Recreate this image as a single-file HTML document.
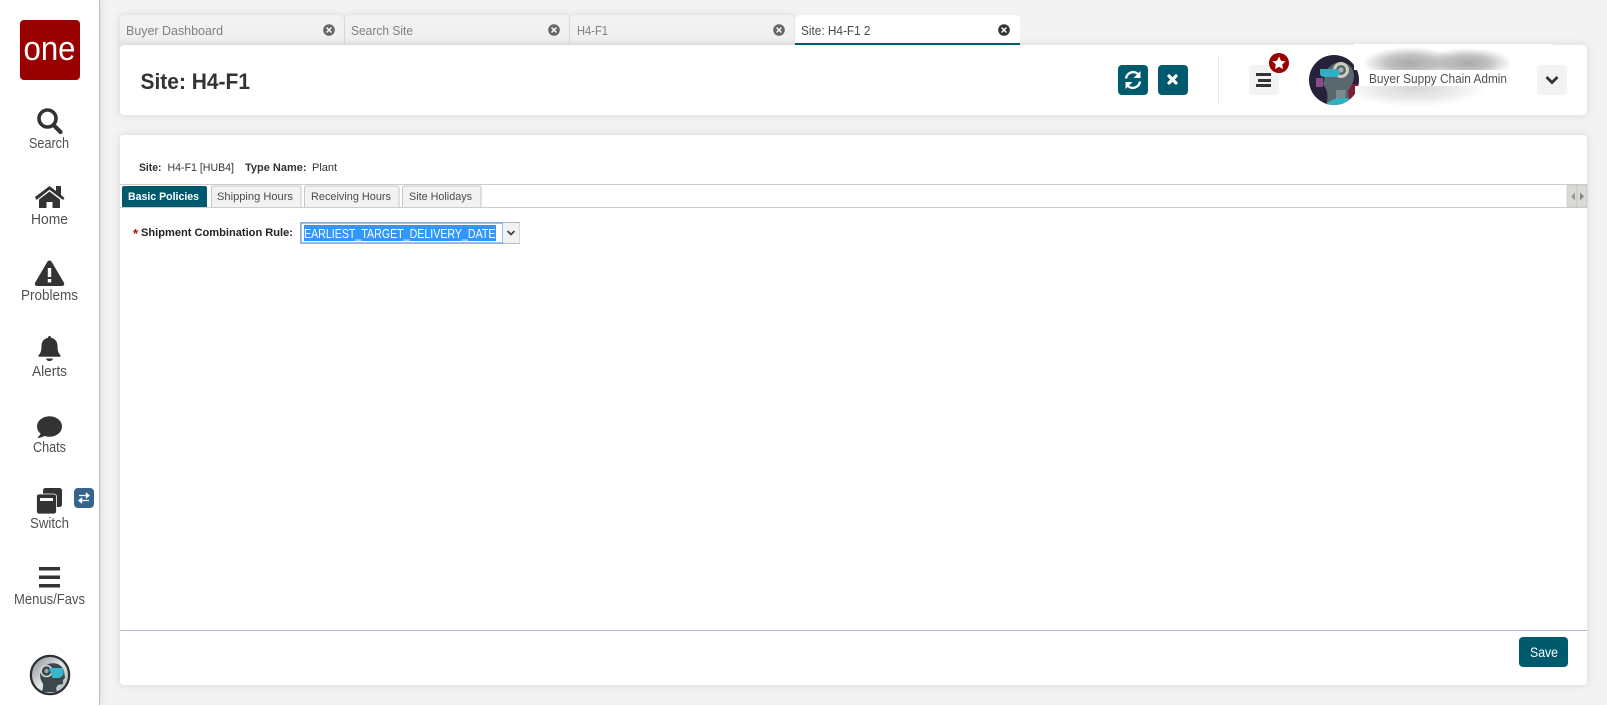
<!DOCTYPE html>
<html><head><meta charset="utf-8"><style>
html,body{margin:0;padding:0;width:1607px;height:705px;overflow:hidden;background:#f3f3f3}
svg{position:absolute;left:0;top:0}
text{font-family:"Liberation Sans",sans-serif}
.n{fill:#505050;font-size:14.5px}
.t{fill:#808080;font-size:12.5px}
</style></head><body>
<svg width="1607" height="705" viewBox="0 0 1607 705">
<defs>
<filter id="sh" x="-5%" y="-20%" width="110%" height="140%"><feDropShadow dx="0" dy="0" stdDeviation="4" flood-color="#000" flood-opacity=".13"/></filter>
<filter id="sh2" x="-5%" y="-5%" width="110%" height="110%"><feDropShadow dx="0" dy="0" stdDeviation="4" flood-color="#000" flood-opacity=".12"/></filter>
<filter id="sh3" x="-300%" y="-5%" width="700%" height="110%"><feDropShadow dx="2" dy="0" stdDeviation="4" flood-color="#000" flood-opacity=".10"/></filter>
<linearGradient id="tg" x1="0" y1="0" x2="0" y2="1"><stop offset="0" stop-color="#f2f2f2"/><stop offset=".7" stop-color="#f0f0f0"/><stop offset="1" stop-color="#e5e5e5"/></linearGradient>
<linearGradient id="rim" x1="0" y1="0" x2="1" y2="1"><stop offset="0" stop-color="#8a8f92"/><stop offset=".5" stop-color="#e2e4e4"/><stop offset="1" stop-color="#aeb2b4"/></linearGradient>
<radialGradient id="g1"><stop offset="0" stop-color="#a4a4a4" stop-opacity=".95"/><stop offset=".5" stop-color="#a8a8a8" stop-opacity=".7"/><stop offset="1" stop-color="#b0b0b0" stop-opacity="0"/></radialGradient>
<radialGradient id="g2"><stop offset="0" stop-color="#cfcfcf" stop-opacity=".85"/><stop offset=".55" stop-color="#d8d8d8" stop-opacity=".55"/><stop offset="1" stop-color="#ddd" stop-opacity="0"/></radialGradient>
<clipPath id="c1"><circle cx="1334" cy="80" r="25"/></clipPath>
<clipPath id="c2"><circle cx="50" cy="675" r="20"/></clipPath>
<clipPath id="cb"><rect x="1354" y="44" width="199" height="26"/><rect x="1355" y="86" width="140" height="21"/></clipPath>
</defs>

<!-- sidebar -->
<rect x="0" y="0" width="99" height="705" fill="#fff" filter="url(#sh3)"/>
<rect x="99" y="0" width="1" height="705" fill="#bdbdbd"/>
<rect x="20" y="20" width="60" height="60" rx="4" fill="#990000"/>
<text x="23.500" y="60" font-size="34" fill="#fff" textLength="52" lengthAdjust="spacingAndGlyphs">one</text>

<g fill="none" stroke="#333"><circle cx="47.500" cy="118.500" r="8.500" stroke-width="3.600"/><path d="M54 125.500l6.500 6.500" stroke-width="4.200" stroke-linecap="round"/></g>
<text class="n" x="29" y="148" textLength="40" lengthAdjust="spacingAndGlyphs">Search</text>

<path fill="#333" d="M35 197l14.500-11 6.500 5v-5h5v9l3.500 3-1.500 2-13.500-10.300-13 10.300z"/>
<path fill="#333" d="M39 199.500l10.500-8 10.500 8v8.500h-7.500v-6h-6v6h-7.500z"/>
<text class="n" x="31" y="224" textLength="37" lengthAdjust="spacingAndGlyphs">Home</text>

<path fill="#333" d="M49.500 260.500c1 0 1.800.5 2.300 1.500l12 20.500c1 1.800 0 3.500-2 3.500h-24.600c-2 0-3-1.700-2-3.500l12-20.500c.5-1 1.300-1.500 2.300-1.500z"/>
<rect x="47.800" y="268" width="3.400" height="9" fill="#fff"/><rect x="47.800" y="279" width="3.400" height="3.400" fill="#fff"/>
<text class="n" x="21" y="300" textLength="57" lengthAdjust="spacingAndGlyphs">Problems</text>

<path fill="#333" d="M49.500 336c1 0 1.500.7 1.500 1.700 4 .8 6.500 4 6.500 8 0 6 1.500 8 2.800 9.300.5.500.5 1.800-.8 1.800h-20c-1.300 0-1.300-1.300-.8-1.800 1.300-1.300 2.800-3.300 2.800-9.300 0-4 2.500-7.200 6.500-8 0-1 .5-1.700 1.500-1.700z"/>
<path fill="#333" d="M46 358.500h7c-.3 1.500-1.800 2.500-3.500 2.500s-3.200-1-3.500-2.500z"/>
<text class="n" x="32" y="376" textLength="35" lengthAdjust="spacingAndGlyphs">Alerts</text>

<ellipse cx="49.500" cy="426.500" rx="12.500" ry="10.300" fill="#333"/>
<path fill="#333" d="M42 432l-4.500 6c3 0 6-1.200 8-3z"/>
<text class="n" x="33" y="452" textLength="33" lengthAdjust="spacingAndGlyphs">Chats</text>

<rect x="43" y="488" width="19" height="19" rx="2.500" fill="#333"/>
<rect x="36.500" y="494" width="20" height="20" rx="2.500" fill="#333" stroke="#fff" stroke-width=".8"/>
<rect x="40" y="498" width="13" height="3" fill="#fff"/>
<text class="n" x="30" y="528" textLength="39" lengthAdjust="spacingAndGlyphs">Switch</text>
<rect x="74" y="488" width="20" height="20" rx="4" fill="#37648c"/>
<g stroke="#fff" stroke-width="1.300" fill="#fff"><path d="M79 495.500h10M86.500 493.500l2.500 2-2.500 2z"/><path d="M89 500.500h-10M81.500 498.500l-2.500 2 2.500 2z"/></g>

<rect x="39" y="567" width="21" height="3.500" fill="#333"/><rect x="39" y="575.500" width="21" height="3.500" fill="#333"/><rect x="39" y="584" width="21" height="3.500" fill="#333"/>
<text class="n" x="14" y="604" textLength="71" lengthAdjust="spacingAndGlyphs">Menus/Favs</text>

<g clip-path="url(#c2)">
<circle cx="50" cy="675" r="20" fill="#30363a"/>
<circle cx="50" cy="675" r="18" fill="url(#rim)"/>
<path d="M42 692c1-4 2-7 0-10-3-5-3-13 4-17 8-4 16-1 18 6l1 7-2 2v4l-5 1-2 3 1 4z" fill="#3c484e"/>
<circle cx="46.500" cy="671" r="5.500" fill="none" stroke="#d8d8d2" stroke-width="1.600"/><circle cx="46.500" cy="671" r="2.200" fill="#9aa2a4"/>
<path d="M49 668h13.500c1.500 2 1.500 6 0 8l-3 2h-7z" fill="#38b6cc"/>
</g>
<circle cx="50" cy="675" r="19.500" fill="none" stroke="#2a2f33" stroke-width="1.500"/>

<!-- top tabs -->
<g filter="url(#sh)"><rect x="120" y="15" width="224" height="34" rx="5" fill="url(#tg)"/><rect x="345" y="15" width="224" height="34" rx="5" fill="url(#tg)"/><rect x="570" y="15" width="224" height="34" rx="5" fill="url(#tg)"/></g>
<g filter="url(#sh)"><rect x="120" y="45" width="1467" height="70" rx="4" fill="#fff"/></g>
<path d="M795 45v-25a5 5 0 0 1 5-5h215a5 5 0 0 1 5 5v25z" fill="#fff"/>
<rect x="795" y="43" width="225" height="2" fill="#005a6e"/>
<text class="t" x="126" y="35" textLength="97" lengthAdjust="spacingAndGlyphs">Buyer Dashboard</text>
<text class="t" x="351" y="35" textLength="62" lengthAdjust="spacingAndGlyphs">Search Site</text>
<text class="t" x="577" y="35" textLength="31" lengthAdjust="spacingAndGlyphs">H4-F1</text>
<text x="801" y="35" font-size="12.500" fill="#4a4a4a" textLength="69.500" lengthAdjust="spacingAndGlyphs">Site: H4-F1 2</text>
<g stroke="#fff" stroke-width="1.500" stroke-linecap="round">
<circle cx="329" cy="30" r="5.800" fill="#666" stroke="none"/><path d="M327 28l4 4M331 28l-4 4"/>
<circle cx="554" cy="30" r="5.800" fill="#666" stroke="none"/><path d="M552 28l4 4M556 28l-4 4"/>
<circle cx="779" cy="30" r="5.800" fill="#666" stroke="none"/><path d="M777 28l4 4M781 28l-4 4"/>
<circle cx="1004" cy="30" r="5.800" fill="#333" stroke="none"/><path d="M1002 28l4 4M1006 28l-4 4"/>
</g>

<!-- header -->
<text x="140.500" y="89" font-size="22" font-weight="bold" fill="#333" textLength="109.500" lengthAdjust="spacingAndGlyphs">Site: H4-F1</text>
<rect x="1118" y="65" width="30" height="30" rx="4" fill="#005a6e"/>
<g fill="none" stroke="#fff" stroke-width="2.400"><path d="M1126 78.500a7.200 7.200 0 0 1 12.500-4"/><path d="M1140 81.500a7.200 7.200 0 0 1-12.500 4"/></g>
<path fill="#fff" d="M1140.500 71v7h-7zM1125.500 89v-7h7z"/>
<rect x="1158" y="65" width="30" height="30" rx="4" fill="#005a6e"/>
<path d="M1169 76l7 7M1176 76l-7 7" stroke="#fff" stroke-width="3.200" stroke-linecap="round"/>
<rect x="1218" y="55" width="1" height="50" fill="#e8e8e8"/>
<rect x="1249" y="65" width="30" height="30" rx="5" fill="#f3f3f3"/>
<rect x="1256" y="73" width="15" height="3" fill="#333"/><rect x="1258" y="79" width="13" height="3" fill="#333"/><rect x="1256" y="84" width="15" height="3" fill="#333"/>
<circle cx="1279" cy="63" r="10" fill="#990000"/>
<path fill="#fff" d="M1279 56.500l2 4.200 4.600.6-3.400 3.200.9 4.600-4.100-2.300-4.100 2.300.9-4.600-3.400-3.200 4.600-.6z"/>

<g clip-path="url(#c1)">
<rect x="1309" y="55" width="50" height="50" fill="#25223a"/>
<rect x="1340" y="84" width="19" height="21" fill="#7a1f38"/>
<rect x="1316" y="78" width="7" height="9" fill="#8a4a8c"/>
<path d="M1326 105c2-6 2-11 0-16l-3-5 3-12c4-9 15-13 23-7 6 5 6 13 3 20l-4 6 1 14z" fill="#59676e"/>
<path d="M1336 90h10l-1 9h-9z" fill="#7f8a8c"/>
<circle cx="1341" cy="70" r="6.500" fill="none" stroke="#cfcdbd" stroke-width="3"/><circle cx="1341" cy="70" r="2.500" fill="#b0b2a8"/>
<path d="M1320 69h14c4 0 6 2 6 4s-2 4-5 4h-10c-3 0-5-1-5-4z" fill="#2fb0c4"/>
<path d="M1326 105c4-6 14-9 25-6l2 6z" fill="#2fb0c4"/>
</g>
<rect x="1354" y="44" width="199" height="26" fill="#fff"/>
<rect x="1359" y="70" width="178" height="16" fill="#fff"/>
<rect x="1355" y="86" width="140" height="21" fill="#fff"/>
<g clip-path="url(#cb)">
<ellipse cx="1410" cy="63" rx="48" ry="16" fill="url(#g1)"/>
<ellipse cx="1468" cy="63" rx="44" ry="15" fill="url(#g1)"/>
<ellipse cx="1415" cy="88" rx="72" ry="19" fill="url(#g2)"/>
</g>
<text x="1369" y="83" font-size="12.500" fill="#505050" textLength="138" lengthAdjust="spacingAndGlyphs">Buyer Suppy Chain Admin</text>
<rect x="1537" y="65" width="30" height="30" rx="5" fill="#f3f3f3"/>
<path d="M1546.500 77l5.500 5.500 5.500-5.500" fill="none" stroke="#333" stroke-width="2.800"/>

<!-- main card -->
<g filter="url(#sh2)"><rect x="120" y="135" width="1467" height="550" rx="4" fill="#fff"/></g>
<g font-size="11" fill="#333">
<text x="139" y="171" font-weight="bold" textLength="22.500" lengthAdjust="spacingAndGlyphs">Site:</text>
<text x="167.500" y="171" textLength="66.500" lengthAdjust="spacingAndGlyphs">H4-F1 [HUB4]</text>
<text x="245" y="171" font-weight="bold" textLength="61.500" lengthAdjust="spacingAndGlyphs">Type Name:</text>
<text x="312" y="171" textLength="25" lengthAdjust="spacingAndGlyphs">Plant</text>
</g>
<rect x="120" y="184" width="1467" height="1" fill="#ccc"/>
<rect x="120" y="207" width="1467" height="1" fill="#ccc"/>
<path d="M122 207v-19a2 2 0 0 1 2-2h81a2 2 0 0 1 2 2v19z" fill="#005a6e"/>
<g fill="#f2f2f2" stroke="#c6c6c6"><path d="M211.500 207v-19a2 2 0 0 1 2-2h85.500a2 2 0 0 1 2 2v19"/><path d="M304.500 207v-19a2 2 0 0 1 2-2h90.500a2 2 0 0 1 2 2v19"/><path d="M402.500 207v-19a2 2 0 0 1 2-2h74.500a2 2 0 0 1 2 2v19"/></g>
<text x="128" y="200" font-size="11" font-weight="bold" fill="#fff" textLength="71" lengthAdjust="spacingAndGlyphs">Basic Policies</text>
<g font-size="11" fill="#4a4a4a">
<text x="217" y="200" textLength="76" lengthAdjust="spacingAndGlyphs">Shipping Hours</text>
<text x="311" y="200" textLength="80" lengthAdjust="spacingAndGlyphs">Receiving Hours</text>
<text x="409" y="200" textLength="63" lengthAdjust="spacingAndGlyphs">Site Holidays</text>
</g>
<rect x="1567" y="185" width="10" height="22" fill="#d8dad6" stroke="#bbb" stroke-width=".5"/>
<rect x="1577" y="185" width="10" height="22" fill="#d8dad6" stroke="#bbb" stroke-width=".5"/>
<path d="M1575 192.500v8l-4-4z" fill="#999"/><path d="M1580 192.500v8l4-4z" fill="#888"/>

<text x="133" y="238" font-size="13" font-weight="bold" fill="#b00">*</text>
<text x="141" y="236" font-size="11" font-weight="bold" fill="#222" textLength="152" lengthAdjust="spacingAndGlyphs">Shipment Combination Rule:</text>
<rect x="300.500" y="222.500" width="219" height="21" fill="#fff" stroke="#bbb"/>
<rect x="301" y="223" width="202" height="20" fill="#fff" stroke="#7aaee8" stroke-width="1.500"/>
<rect x="304" y="225" width="192" height="16" fill="#3297fd"/>
<text x="304" y="238" font-size="13" fill="#fff" textLength="191.500" lengthAdjust="spacingAndGlyphs">EARLIEST_TARGET_DELIVERY_DATE</text>
<rect x="503" y="223" width="16.500" height="20" fill="#f1f1f1"/>
<path d="M507.500 231l3.500 3.500 3.500-3.500" fill="none" stroke="#444" stroke-width="1.800"/>

<rect x="120" y="630" width="1467" height="1" fill="#b5b5c9"/>
<rect x="1519" y="637" width="49" height="30" rx="4" fill="#005a6e"/>
<text x="1530" y="657" font-size="14" fill="#fff" textLength="28" lengthAdjust="spacingAndGlyphs">Save</text>
</svg>
</body></html>
